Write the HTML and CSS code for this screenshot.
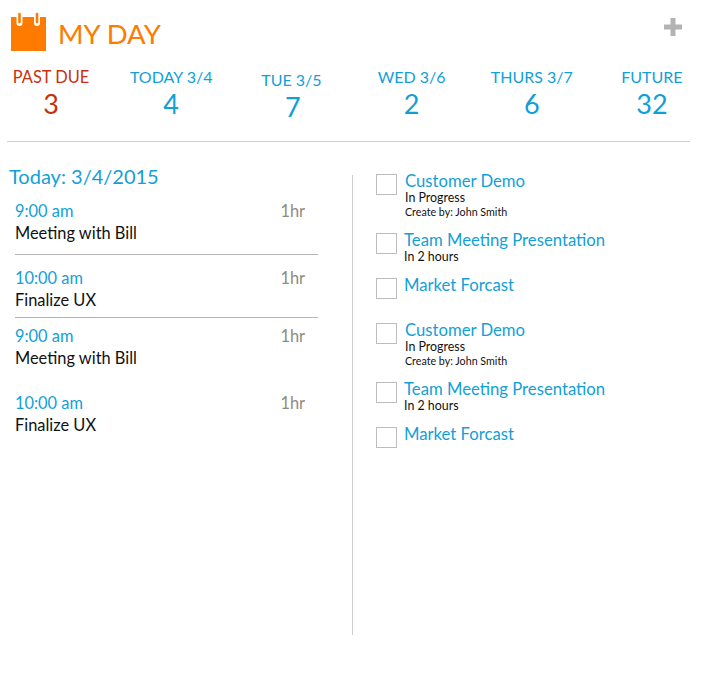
FILE: index.html
```html
<!DOCTYPE html>
<html lang="en">
<head>
<meta charset="utf-8">
<title>My Day</title>
<link rel="stylesheet" href="styles.css">
</head>
<body>
<div class="page">
  <header class="head">
    <svg class="cal" width="35" height="40" viewBox="0 0 35 40" aria-hidden="true">
      <path fill="#ff7b00" d="M0 5h35v34H0z"/>
      <path fill="none" stroke="#fff" stroke-width="6" stroke-linecap="round" d="M8.500 3v8M26 3v8"/>
      <path fill="none" stroke="#ff7b00" stroke-width="2.600" stroke-linecap="round" d="M8.500 2v8M26 2v8"/>
    </svg>
    <h1 class="title">MY DAY</h1>
    <svg class="plus" width="18" height="18" viewBox="0 0 18 18" aria-hidden="true"><path fill="#b3b3b3" d="M6.500 0h5v6.500h6.500v5h-6.500v6.500h-5v-6.500H0v-5h6.500z"/></svg>
  </header>
  <div class="stats">
    <div class="stat past"><div class="lab">PAST DUE</div><div class="num">3</div></div>
    <div class="stat"><div class="lab">TODAY 3/4</div><div class="num">4</div></div>
    <div class="stat low"><div class="lab">TUE 3/5</div><div class="num">7</div></div>
    <div class="stat"><div class="lab">WED 3/6</div><div class="num">2</div></div>
    <div class="stat"><div class="lab">THURS 3/7</div><div class="num">6</div></div>
    <div class="stat"><div class="lab">FUTURE</div><div class="num">32</div></div>
  </div>
  <main class="cols">
    <section class="left">
      <h2 class="today">Today: 3/4/2015</h2>
      <div class="ev first"><div class="ev-top"><span class="time">9:00 am</span><span class="dur">1hr</span></div><div class="what">Meeting with Bill</div></div>
      <div class="ev second"><div class="ev-top"><span class="time">10:00 am</span><span class="dur">1hr</span></div><div class="what">Finalize UX</div></div>
      <div class="ev"><div class="ev-top"><span class="time">9:00 am</span><span class="dur">1hr</span></div><div class="what">Meeting with Bill</div></div>
      <div class="ev"><div class="ev-top"><span class="time">10:00 am</span><span class="dur">1hr</span></div><div class="what">Finalize UX</div></div>
    </section>
    <section class="right">
      <div class="task t1"><span class="box"></span><div class="body"><div class="name">Customer Demo</div><div class="sub">In Progress</div><div class="by">Create by: John Smith</div></div></div>
      <div class="task t2"><span class="box"></span><div class="body"><div class="name">Team Meeting Presentation</div><div class="sub">In 2 hours</div></div></div>
      <div class="task t3"><span class="box"></span><div class="body"><div class="name">Market Forcast</div></div></div>
      <div class="task t1"><span class="box"></span><div class="body"><div class="name">Customer Demo</div><div class="sub">In Progress</div><div class="by">Create by: John Smith</div></div></div>
      <div class="task t2"><span class="box"></span><div class="body"><div class="name">Team Meeting Presentation</div><div class="sub">In 2 hours</div></div></div>
      <div class="task t3"><span class="box"></span><div class="body"><div class="name">Market Forcast</div></div></div>
    </section>
  </main>
</div>
</body>
</html>
```
FILE: styles.css
```css
* { box-sizing: border-box; }
html, body { margin: 0; padding: 0; background: #fff; }
body { font-family: "Lato", "Open Sans", sans-serif; color: #111; }
.page { width: 701px; height: 679px; }
.head { display: flex; align-items: flex-start; padding: 12px 19px 0 11px; height: 67px; }
.cal { display: block; flex: none; }
.title { margin: 6px 0 0 12px; font-size: 27.5px; line-height: 32px; font-weight: 400; color: #ff7b00; flex: 1; }
.plus { margin-top: 6px; }
.stats { display: flex; justify-content: space-between; padding: 0 1px 0 3px; height: 62px; margin-bottom: 12px; }
.stat { width: 96px; text-align: center; color: #129fd8; }
.past { color: #c9300f; }
.past .lab { font-size: 16.4px; }
.low { padding-top: 3px; }
.low .num { margin-left: 3px; }
.lab { font-size: 16px; line-height: 19px; white-space: nowrap; }
.num { font-size: 27px; line-height: 31px; margin-top: 2px; }
.cols { display: flex; border-top: 1px solid #d0d0d0; margin: 0 11px 0 7px; padding-top: 33px; height: 494px; }
.left { width: 346px; flex: none; border-right: 1px solid #cfcfcf; padding: 0 34px 0 2px; height: 460px; }
.today { margin: -12px 0 0; font-size: 20px; line-height: 26px; font-weight: 400; color: #129fd8; }
.ev { margin-left: 6px; padding-top: 7px; height: 67px; }
.ev-top { display: flex; justify-content: space-between; padding-right: 13px; }
.first { padding-top: 11px; height: 66px; border-bottom: 1px solid #b5b5b5; }
.second { padding-top: 12px; height: 63px; border-bottom: 1px solid #b5b5b5; }
.time { font-size: 16.4px; line-height: 22px; color: #129fd8; }
.dur { font-size: 16.4px; line-height: 22px; color: #8c8c80; }
.what { font-size: 16.4px; line-height: 22px; color: #111; }
.right { padding: 0 0 0 23px; margin-top: -1px; }
.task { display: flex; align-items: flex-start; }
.t1 { height: 59px; }
.t2 { height: 45px; }
.t3 { height: 45px; }
.box { width: 21px; height: 21px; border: 1px solid #bdbdbd; flex: none; margin-right: 7px; }
.t1 .box { margin-right: 8px; }
.name { font-size: 16.7px; line-height: 18px; margin-top: -2px; color: #129fd8; }
.sub { font-size: 12.4px; line-height: 15px; color: #111; }
.by { font-size: 10.7px; line-height: 14px; color: #111; }
```
